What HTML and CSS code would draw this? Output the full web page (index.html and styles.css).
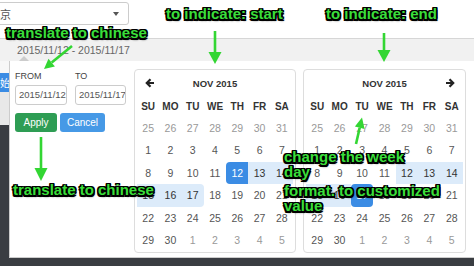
FILE: index.html
```html
<!DOCTYPE html>
<html lang="en">
    <head>
        <meta charset="UTF-8" />
        <meta name="viewport" content="width=device-width, initial-scale=1.0" />
        <title>Date Range Picker</title>
        <link rel="stylesheet" href="styles.css">
    </head>
    <body>
        <div class="page">
            <div class="topbar">
                <div class="city-select">
                    <span class="city">北京</span>
                    <span class="caret"></span>
                </div>
            </div>
            <div class="range-input">2015/11/12 - 2015/11/17</div>

            <div class="main">
                <div class="side">
                    <div class="side-top"></div>
                    <div class="side-tag"><span>开始</span></div>
                    <div class="side-gap"></div>
                    <div class="side-dark"></div>
                </div>

                <div class="picker">
                    <div class="ranges">
                        <div class="range-fields">
                            <div class="field field-from">
                                <label>FROM</label>
                                <div class="date-box">2015/11/12</div>
                            </div>
                            <div class="field field-to">
                                <label>TO</label>
                                <div class="date-box">2015/11/17</div>
                            </div>
                        </div>
                        <div class="range-buttons">
                            <button class="btn btn-apply">Apply</button>
                            <button class="btn btn-cancel">Cancel</button>
                        </div>
                    </div>

                    <div class="calendar calendar-left">
                        <div class="cal-head">
                            <svg class="cal-arrow" width="10" height="10" viewBox="0 0 10 10">
                                <path d="M9 5H2M5.5 1.3L1.8 5l3.7 3.7" />
                            </svg>
                            <span class="cal-title">NOV 2015</span>
                            <span class="cal-arrow-space"></span>
                        </div>
                        <div class="weekdays">
                            <span>SU</span><span>MO</span><span>TU</span><span>WE</span><span>TH</span><span>FR</span><span>SA</span>
                        </div>
                        <div class="days" id="leftDays"></div>
                    </div>

                    <div class="calendar calendar-right">
                        <div class="cal-head">
                            <span class="cal-arrow-space"></span>
                            <span class="cal-title">NOV 2015</span>
                            <svg class="cal-arrow" width="10" height="10" viewBox="0 0 10 10">
                                <path d="M1 5h7M4.5 1.3L8.2 5 4.5 8.7" />
                            </svg>
                        </div>
                        <div class="weekdays">
                            <span>SU</span><span>MO</span><span>TU</span><span>WE</span><span>TH</span><span>FR</span><span>SA</span>
                        </div>
                        <div class="days" id="rightDays"></div>
                    </div>
                </div>
            </div>
            <div class="footer"></div>

            <!-- annotations drawn over the screenshot -->
            <svg class="arrows" width="474" height="266" viewBox="0 0 474 266">
                <line x1="72" y1="46" x2="51.7" y2="62.6" />
                <polygon points="44,69 54.9,66.5 48.5,58.8" />
                <line x1="215" y1="31" x2="215" y2="53" />
                <polygon points="208.5,52 221.5,52 215,64" />
                <line x1="384" y1="33" x2="384" y2="51" />
                <polygon points="377.5,50 390.5,50 384,62" />
                <line x1="41" y1="137" x2="41" y2="170" />
                <polygon points="34.5,168 47.5,168 41,181" />
                <line x1="356" y1="144" x2="359.7" y2="127.7" />
                <polygon points="362,117.5 364.6,128.9 354.9,126.6" />
            </svg>
            <div class="note note-translate-top">translate to chinese</div>
            <div class="note note-start">to indicate: start</div>
            <div class="note note-end">to indicate: end</div>
            <div class="note note-translate-bottom">translate to chinese</div>
            <div class="note note-weekday">
                <div>change the week<br />day</div>
                <div class="note-para">format. to customized<br />value</div>
            </div>
        </div>

        <script>
            function fillCalendar(id, start, end, active) {
                const grid = document.getElementById(id)
                const days = []
                for (let d = 25; d <= 31; d++) days.push({ n: d, off: true })
                for (let d = 1; d <= 30; d++) days.push({ n: d, off: false })
                for (let d = 1; d <= 5; d++) days.push({ n: d, off: true })

                days.forEach(function (day) {
                    const cell = document.createElement("span")
                    cell.className = "day"
                    cell.textContent = day.n
                    if (day.off) {
                        cell.classList.add("off")
                    } else {
                        if (day.n >= start && day.n <= end) cell.classList.add("in-range")
                        if (day.n === end) cell.classList.add("range-end")
                        if (day.n === active) cell.classList.add("active")
                    }
                    grid.appendChild(cell)
                })
            }

            fillCalendar("leftDays", 12, 17, 12)
            fillCalendar("rightDays", 12, 17, 17)
        </script>
    </body>
</html>
```

FILE: styles.css
```css
* {
    box-sizing: border-box;
}
body {
    margin: 0;
    font-family: "Liberation Sans", Arial, sans-serif;
    background-color: #fff;
}
.page {
    position: relative;
    width: 474px;
    height: 266px;
    overflow: hidden;
    display: flex;
    flex-direction: column;
}
.topbar {
    height: 38px;
    padding-top: 2px;
    flex-shrink: 0;
}
.city-select {
    width: 150px;
    height: 23px;
    margin-left: -21px;
    border: 1px solid #ccc;
    border-radius: 3px;
    display: flex;
    align-items: center;
    justify-content: space-between;
    padding: 0 9px 0 9px;
    font-family: "Liberation Sans", "Noto Sans CJK SC", sans-serif;
    font-size: 11px;
    color: #555;
}
.caret {
    width: 0;
    height: 0;
    border-left: 3px solid transparent;
    border-right: 3px solid transparent;
    border-top: 4px solid #555;
}
.range-input {
    height: 23px;
    flex-shrink: 0;
    background-color: #f1f1f1;
    border-top: 1px solid #d6d6d6;
    padding-left: 17px;
    font-size: 10.5px;
    line-height: 23px;
    color: #666;
}
.main {
    flex: 1;
    display: flex;
    min-height: 0;
}
.side {
    width: 9px;
    display: flex;
    flex-direction: column;
}
.side-top {
    height: 12px;
    background-color: #f7f7f7;
}
.side-tag {
    height: 19px;
    background-color: #3b8ce4;
    overflow: hidden;
    display: flex;
    justify-content: flex-end;
    align-items: center;
    font-family: "Noto Sans CJK SC", sans-serif;
    font-size: 10px;
    color: #fff;
}
.side-tag span {
    margin-right: -1px;
    white-space: nowrap;
}
.side-gap {
    height: 33px;
    background-color: #e8e8e8;
}
.side-dark {
    flex: 1;
    background-color: #3a3d42;
}
.picker {
    position: relative;
    flex: 1;
    display: flex;
    align-items: flex-start;
    background-color: #fff;
    border-left: 1px solid #ccc;
    border-bottom: 1px solid #ccc;
    padding: 8px 0 0 5px;
}
.picker::before {
    content: "";
    position: absolute;
    top: -5px;
    left: 9px;
    border-left: 5px solid transparent;
    border-right: 5px solid transparent;
    border-bottom: 5px solid #ccc;
}
.ranges {
    width: 112px;
    margin-right: 7px;
    padding-top: 2px;
}
.range-fields {
    display: flex;
    gap: 8px;
}
.field label {
    display: block;
    font-size: 9px;
    line-height: 10px;
    margin-bottom: 4px;
    color: #444;
}
.field-from .date-box {
    width: 52px;
}
.field-to .date-box {
    width: 51px;
}
.date-box {
    height: 20px;
    border: 1px solid #ccc;
    border-radius: 3px;
    padding: 0 3px;
    font-size: 9.5px;
    line-height: 18px;
    color: #555;
    white-space: nowrap;
    overflow: hidden;
}
.range-buttons {
    display: flex;
    gap: 3px;
    margin-top: 8px;
}
.btn {
    height: 19px;
    border: none;
    border-radius: 3px;
    padding: 0;
    font-family: "Liberation Sans", Arial, sans-serif;
    font-size: 10px;
    color: #fff;
    cursor: pointer;
}
.btn-apply {
    width: 42px;
    background-color: #2e9d54;
}
.btn-cancel {
    width: 45px;
    background-color: #4699e6;
}
.calendar {
    height: 184px;
    border: 1px solid #ddd;
    border-radius: 4px;
    padding: 0 2px 2px;
}
.calendar-left {
    width: 162px;
    margin-right: 7px;
}
.calendar-right {
    width: 163px;
}
.cal-head {
    height: 26px;
    display: flex;
    align-items: center;
    justify-content: space-between;
    padding: 0 8px;
}
.cal-arrow {
    display: block;
}
.cal-arrow path {
    fill: none;
    stroke: #222;
    stroke-width: 2.2;
}
.cal-arrow-space {
    width: 10px;
}
.cal-title {
    font-size: 9.5px;
    font-weight: bold;
    color: #333;
}
.weekdays,
.days {
    display: grid;
    grid-template-columns: repeat(7, 1fr);
}
.weekdays span {
    height: 21px;
    line-height: 21px;
    text-align: center;
    font-size: 10px;
    font-weight: bold;
    color: #333;
}
.day {
    height: 22.4px;
    line-height: 22.4px;
    text-align: center;
    font-size: 10.5px;
    color: #555;
}
.day.off {
    color: #999;
}
.day.in-range {
    background-color: #dcebfa;
    color: #333;
}
.day.range-end {
    border-radius: 0 4px 4px 0;
}
.day.active {
    background-color: #3b8ce4;
    color: #fff;
    border-radius: 4px 0 0 4px;
}
.day.active.range-end {
    border-radius: 4px;
}
.footer {
    height: 8px;
    flex-shrink: 0;
    background-color: #3a3d42;
}
.arrows {
    position: absolute;
    top: 0;
    left: 0;
    pointer-events: none;
}
.arrows line {
    stroke: #33d633;
    stroke-width: 2.6;
}
.arrows polygon {
    fill: #33d633;
}
.note {
    position: absolute;
    font-family: "Liberation Sans", Arial, sans-serif;
    font-weight: bold;
    font-size: 15px;
    line-height: 16px;
    color: #3ade3a;
    white-space: nowrap;
    text-shadow:
        -1.5px -1.5px 0 #000, 1.5px -1.5px 0 #000, -1.5px 1.5px 0 #000, 1.5px 1.5px 0 #000,
        0 -1.5px 0 #000, 0 1.5px 0 #000, -1.5px 0 0 #000, 1.5px 0 0 #000,
        1px 2px 2px rgba(0, 0, 0, 0.6);
}
.note-translate-top {
    top: 25px;
    left: 6px;
}
.note-start {
    top: 6px;
    left: 166px;
}
.note-end {
    top: 6px;
    left: 326px;
}
.note-translate-bottom {
    top: 182px;
    left: 13px;
}
.note-weekday {
    top: 149px;
    left: 284px;
    line-height: 15px;
}
.note-para {
    margin-top: 4px;
}
```
